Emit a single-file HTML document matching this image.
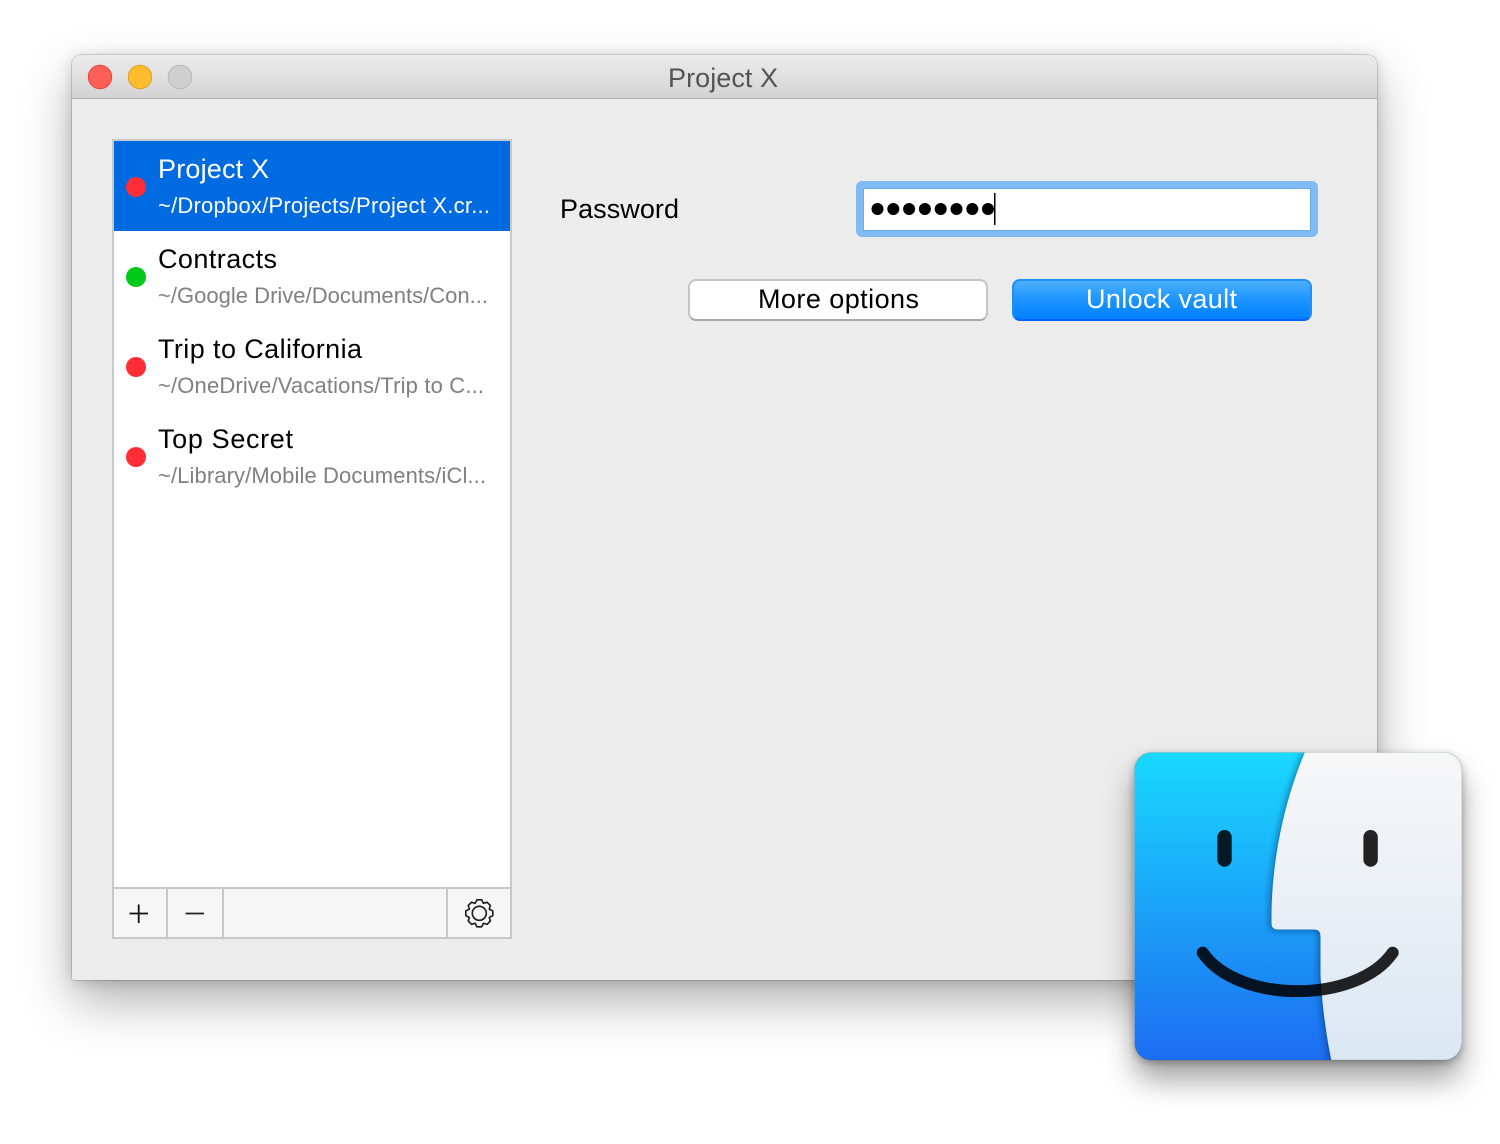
<!DOCTYPE html>
<html><head><meta charset="utf-8"><style>
html,body{margin:0;padding:0;width:1500px;height:1144px;background:#fff;overflow:hidden}
body{position:relative}
div{position:absolute;box-sizing:border-box}
svg{position:absolute;left:0;top:0}
text{font-family:"Liberation Sans",sans-serif}
.m{font-size:27px;fill:#000}
.s{font-size:22px;fill:#808080}
</style></head><body>
<div style="left:71.500px;top:54.500px;width:1305px;height:925px;background:#ececec;border-radius:9px 9px 2px 2px;box-shadow:0 0 0 .5px rgba(0,0,0,.28),0 22px 50px rgba(0,0,0,.3),0 2px 14px rgba(0,0,0,.16)"></div>
<div style="left:71.500px;top:54.500px;width:1305px;height:44.500px;border-radius:9px 9px 0 0;background:linear-gradient(#ececec,#d3d3d3);border-bottom:1px solid #b1b1b1"></div>
<div style="left:112px;top:139px;width:400px;height:800px;background:#fff;border:2px solid #c8c8c8"></div>
<div style="left:114px;top:141px;width:396px;height:90px;background:#006ae1"></div>
<div style="left:114px;top:887px;width:396px;height:52px;background:#f6f6f6;border-top:2px solid #c8c8c8;border-bottom:2px solid #c8c8c8"></div>
<div style="left:166px;top:887px;width:2px;height:54px;background:linear-gradient(#c8c8c8 52px,#e0e0e0 52px)"></div>
<div style="left:222px;top:887px;width:2px;height:54px;background:linear-gradient(#c8c8c8 52px,#e0e0e0 52px)"></div>
<div style="left:446px;top:887px;width:2px;height:52px;background:#c8c8c8"></div>
<div style="left:856px;top:181px;width:462px;height:56px;background:#80bbf3;border-radius:6px"></div>
<div style="left:863px;top:188px;width:448px;height:43px;background:#fff;border:1.500px solid #6fabe6"></div>
<div style="left:688px;top:279px;width:300px;height:42px;background:#fff;border-radius:8px;border:2px solid #c4c4c4;border-bottom:2.500px solid #a8a8a8"></div>
<div style="left:1012px;top:279px;width:300px;height:42px;border-radius:8px;background:linear-gradient(#4db1ff,#1f96ff 45%,#0081ff);border:2px solid #1c90ff;border-bottom:2px solid #0063ff"></div>
<div style="left:1134px;top:752px;width:328px;height:308px;border-radius:18px;box-shadow:0 20px 30px rgba(0,0,0,.36),0 3px 8px rgba(0,0,0,.28)"></div>

<svg width="1500" height="1144" viewBox="0 0 1500 1144">
<defs>
<linearGradient id="b" x1="0" y1="0" x2="0" y2="1"><stop offset="0" stop-color="#19d9ff"/><stop offset="1" stop-color="#1c6df1"/></linearGradient>
<linearGradient id="w" x1="0" y1="0" x2="0" y2="1"><stop offset="0" stop-color="#f7f7f7"/><stop offset="1" stop-color="#dbe7f3"/></linearGradient>
<clipPath id="c"><rect x="1134.500" y="752.500" width="327" height="307.500" rx="17"/></clipPath>
<filter id="f" x="-20%" y="-10%" width="140%" height="120%"><feDropShadow dx="-2" dy="1" stdDeviation="3.500" flood-color="#00205a" flood-opacity=".5"/></filter>
</defs>

<circle cx="100" cy="77" r="11.700" fill="#ff5f57" stroke="#e2463f" stroke-width="1"/>
<circle cx="140" cy="77" r="11.700" fill="#ffbd2e" stroke="#dfa023" stroke-width="1"/>
<circle cx="180" cy="77" r="11.700" fill="#cfcfcf" stroke="#b9b9b9" stroke-width="1"/>
<text x="668" y="87" class="m" style="fill:#545454" textLength="110">Project X</text>

<circle cx="136" cy="187" r="10" fill="#ff2d35"/>
<circle cx="136" cy="277" r="10" fill="#00c91a"/>
<circle cx="136" cy="367" r="10" fill="#ff2d35"/>
<circle cx="136" cy="457" r="10" fill="#ff2d35"/>

<text x="158" y="178" class="m" style="fill:#fff" textLength="111">Project X</text>
<text x="158" y="213" class="s" style="fill:#fff" textLength="332">~/Dropbox/Projects/Project X.cr...</text>
<text x="158" y="268" class="m" textLength="119">Contracts</text>
<text x="158" y="303" class="s" textLength="330">~/Google Drive/Documents/Con...</text>
<text x="158" y="358" class="m" textLength="204">Trip to California</text>
<text x="158" y="393" class="s" textLength="326">~/OneDrive/Vacations/Trip to C...</text>
<text x="158" y="448" class="m" textLength="135">Top Secret</text>
<text x="158" y="483" class="s" textLength="328">~/Library/Mobile Documents/iCl...</text>

<path d="M129.500 913.500H148M138.700 904.500V923" stroke="#111" stroke-width="1.800" fill="none"/>
<path d="M185.500 913.500H204" stroke="#222" stroke-width="1.800" fill="none"/>
<g transform="translate(479.300 913.300)" fill="none" stroke="#1a1a1a" stroke-width="1.600" stroke-linejoin="round">
<path d="M13.500-2.380L13.500 2.380L9.980 4.130L11.060 7.740L7.740 11.060L4.130 9.980L2.380 13.500L-2.380 13.500L-4.130 9.980L-7.740 11.060L-11.060 7.740L-9.980 4.130L-13.500 2.380L-13.500-2.380L-9.980-4.130L-11.060-7.740L-7.740-11.060L-4.130-9.980L-2.380-13.500L2.380-13.500L4.130-9.980L7.740-11.060L11.060-7.740L9.980-4.130Z"/>
<circle r="7"/>
</g>

<text x="560" y="218" class="m" textLength="119">Password</text>
<g fill="#000"><circle cx="877.500" cy="209" r="6"/><circle cx="893.300" cy="209" r="6"/><circle cx="909.100" cy="209" r="6"/><circle cx="924.900" cy="209" r="6"/><circle cx="940.700" cy="209" r="6"/><circle cx="956.500" cy="209" r="6"/><circle cx="972.300" cy="209" r="6"/><circle cx="988" cy="209" r="6"/></g>
<rect x="994" y="193" width="1.500" height="32" fill="#000"/>
<text x="758" y="308" class="m" textLength="161">More options</text>
<text x="1086" y="308" class="m" style="fill:#fff" textLength="151">Unlock vault</text>

<g clip-path="url(#c)">
<rect x="1134" y="752" width="328" height="308" fill="url(#b)"/>
<path d="M1305 752C1284 802 1272 860 1271.500 916V923Q1271.500 929.500 1278 929.500H1314Q1320.500 929.500 1320.500 936V975Q1323 1020 1331.500 1061H1463V752Z" fill="url(#w)" filter="url(#f)"/>
<rect x="1217.300" y="830" width="14.400" height="36.700" rx="7.200" fill="#000" fill-opacity=".86"/>
<rect x="1363.400" y="830" width="14.400" height="36.700" rx="7.200" fill="#000" fill-opacity=".86"/>
<path d="M1202.700 952.700C1238 1004 1357 1004 1392.700 952.700" fill="none" stroke="#000" stroke-opacity=".86" stroke-width="12" stroke-linecap="round"/>
</g>
<rect x="1134.500" y="752.500" width="327" height="307.500" rx="17" fill="none" stroke="#000" stroke-opacity=".12"/>
</svg>
</body></html>
